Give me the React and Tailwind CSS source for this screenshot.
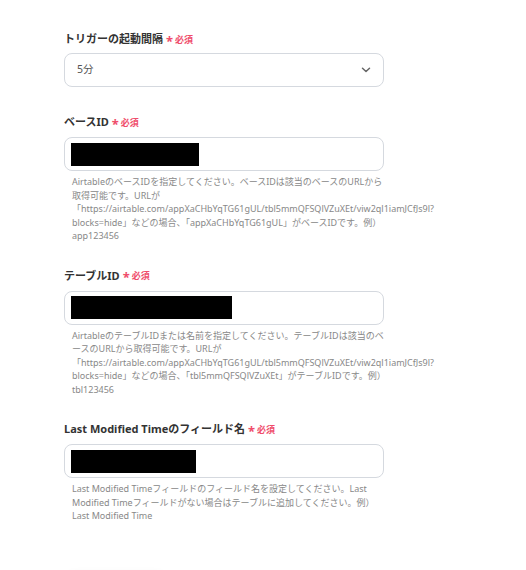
import { useState } from 'react';

const FONT = { fontFamily: '"Noto Sans", "Noto Sans CJK JP", sans-serif' };

function Required() {
  return (
    <span className="ml-[3px] inline-flex items-center text-[#ef4d6b]">
      <span className="text-[13px] font-bold leading-none relative top-[2px]">*</span>
      <span className="ml-[2px] text-[9px] font-bold leading-none">必須</span>
    </span>
  );
}

function Label({ children }) {
  return (
    <div className="flex items-center text-[11px] font-bold leading-[16px] text-[#333333]">
      {children}
      <Required />
    </div>
  );
}

function Masked({ width }) {
  return (
    <div className="h-[34px] rounded-[8px] border border-[#d5d9df] bg-white flex items-center px-[6px]">
      <div className="h-[23px] bg-black" style={{ width }} />
    </div>
  );
}

function Help({ lines }) {
  return (
    <p className="mt-[4px] px-[8px] text-[9px] leading-[13.5px] text-[#888888] whitespace-nowrap">
      {lines.map((l, i) => (
        <span key={i} className="block">{l}</span>
      ))}
    </p>
  );
}

const URL_LINE = '「https://airtable.com/appXaCHbYqTG61gUL/tbl5mmQFSQlVZuXEt/viw2ql1iamJCfJs9l?';

export default function App() {
  const [interval, setInterval] = useState('5分');

  return (
    <div className="h-[570px] bg-white overflow-hidden" style={FONT}>
      <div className="w-[320px] ml-[64px] pt-[31px]">
        {/* トリガーの起動間隔 */}
        <Label>トリガーの起動間隔</Label>
        <div className="mt-[6px] h-[34px] rounded-[8px] border border-[#d5d9df] bg-white flex items-center justify-between pl-[12px] pr-[12px]">
          <span className="text-[10.5px] text-[#555555]">{interval}</span>
          <svg width="10" height="6" viewBox="0 0 10 6" fill="none" onClick={() => setInterval('5分')}>
            <path d="M1.5 1.2 L5 4.5 L8.5 1.2" stroke="#666666" strokeWidth="1.5" strokeLinecap="round" strokeLinejoin="round" />
          </svg>
        </div>

        {/* ベースID */}
        <div className="mt-[27px]">
          <Label>ベースID</Label>
          <div className="mt-[7px]">
            <Masked width={128} />
          </div>
          <Help
            lines={[
              'AirtableのベースIDを指定してください。ベースIDは該当のベースのURLから',
              '取得可能です。URLが',
              URL_LINE,
              'blocks=hide」などの場合、「appXaCHbYqTG61gUL」がベースIDです。例）',
              'app123456',
            ]}
          />
        </div>

        {/* テーブルID */}
        <div className="mt-[25px]">
          <Label>テーブルID</Label>
          <div className="mt-[7px]">
            <Masked width={161} />
          </div>
          <Help
            lines={[
              'AirtableのテーブルIDまたは名前を指定してください。テーブルIDは該当のベ',
              'ースのURLから取得可能です。URLが',
              URL_LINE,
              'blocks=hide」などの場合、「tbl5mmQFSQlVZuXEt」がテーブルIDです。例）',
              'tbl123456',
            ]}
          />
        </div>

        {/* Last Modified Time */}
        <div className="mt-[25px]">
          <Label>Last Modified Timeのフィールド名</Label>
          <div className="mt-[7px]">
            <Masked width={125} />
          </div>
          <Help
            lines={[
              'Last Modified Timeフィールドのフィールド名を設定してください。Last',
              'Modified Timeフィールドがない場合はテーブルに追加してください。例）',
              'Last Modified Time',
            ]}
          />
        </div>

        <div className="mt-[52px] ml-[4px] h-[36px] w-[96px] rounded-[6px] bg-white shadow-[0_0_10px_rgba(0,0,0,0.08)]" />
      </div>
    </div>
  );
}
